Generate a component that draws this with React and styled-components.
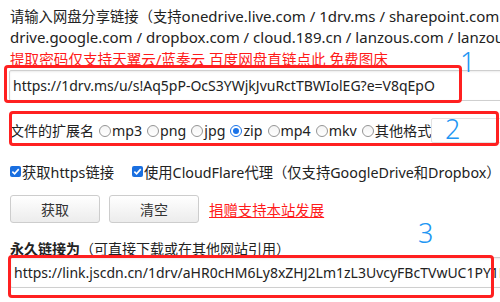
import React from "react";
import styled, { createGlobalStyle } from "styled-components";

const Global = createGlobalStyle`
  html, body { margin: 0; padding: 0; background: #fff; overflow: hidden; }
  body {
    font-family: "Noto Sans", "Noto Sans CJK SC", sans-serif;
    color: #222;
    width: 500px;
    height: 302px;
  }
`;

const Page = styled.div`
  position: relative;
  width: 500px;
  height: 302px;
  overflow: hidden;
`;

const Content = styled.div`
  width: 640px;
  padding: 6px 0 0 10px;
  display: flex;
  flex-direction: column;
`;

const Line = styled.div`
  font-size: 15px;
  line-height: 20px;
  white-space: nowrap;
`;

const Cjk = styled.span`
  font-size: 14.3px;
`;

const Notice = styled.div`
  margin-top: 2px;
  font-size: 14.6px;
  line-height: 19px;
  color: #ff1a1a;
  white-space: nowrap;
`;

const RedLink = styled.a`
  color: #ff1a1a;
  text-decoration: ${(p) => (p.$underline ? "underline" : "none")};
`;

const TextField = styled.input`
  box-sizing: border-box;
  width: ${(p) => p.$width}px;
  height: 31px;
  margin: ${(p) => p.$margin};
  padding: 0 3px;
  border: 1px solid #cfcfcf;
  border-radius: 2px;
  box-shadow: inset 0 1px 2px rgba(0, 0, 0, 0.08);
  font-family: "Noto Sans", "Noto Sans CJK SC", sans-serif;
  font-size: 14px;
  color: #222;
  background: #fff;
  outline: none;
`;

const RadioRow = styled.div`
  margin-top: 16px;
  display: flex;
  align-items: center;
  height: 26px;
  font-size: 14px;
  white-space: nowrap;
`;

const RadioLabel = styled.label`
  display: inline-flex;
  align-items: center;
  margin-left: 5px;
  font-size: 14.2px;
`;

const RadioDot = styled.span`
  box-sizing: border-box;
  width: 12px;
  height: 12px;
  border-radius: 50%;
  border: 1px solid ${(p) => (p.$checked ? "#1a73e8" : "#959595")};
  background: ${(p) => (p.$checked ? "#fff" : "linear-gradient(#f4f4f4, #ffffff)")};
  margin-right: 1px;
  margin-top: 1px;
  display: inline-flex;
  align-items: center;
  justify-content: center;
  &::after {
    content: "";
    width: 6px;
    height: 6px;
    border-radius: 50%;
    background: ${(p) => (p.$checked ? "#1a73e8" : "transparent")};
  }
`;

const OtherField = styled.input`
  box-sizing: border-box;
  width: 100px;
  height: 25px;
  margin-left: 0;
  border: 1px solid #e2e2e2;
  border-radius: 2px;
  background: #fff;
  outline: none;
`;

const CheckRow = styled.div`
  margin-top: 18px;
  display: flex;
  align-items: center;
  height: 20px;
  font-size: 14.3px;
  white-space: nowrap;
`;

const CheckLabel = styled.label`
  display: inline-flex;
  align-items: center;
  margin-right: ${(p) => p.$gap || 0}px;
`;

const CheckBox = styled.span`
  width: 11px;
  height: 11px;
  border-radius: 2px;
  background: #1a6fe0;
  display: inline-flex;
  align-items: center;
  justify-content: center;
  margin-right: 1px;
  margin-top: 1px;
`;

const ButtonRow = styled.div`
  margin-top: 14px;
  display: flex;
  align-items: center;
  gap: 9px;
`;

const Button = styled.button`
  box-sizing: border-box;
  width: 90px;
  height: 28px;
  border: 1px solid #cdcdcd;
  border-radius: 3px;
  background: linear-gradient(#ffffff, #ececec);
  font-family: "Noto Sans", "Noto Sans CJK SC", sans-serif;
  font-size: 14px;
  color: #333;
  padding: 0;
`;

const DonateLink = styled.a`
  margin-left: 1px;
  font-size: 14.4px;
  color: #ff1a1a;
  text-decoration: underline;
`;

const ResultLabel = styled.div`
  margin-top: 18px;
  font-size: 14px;
  line-height: 16px;
  white-space: nowrap;
  b { font-weight: 700; }
`;

const Annotation = styled.div`
  position: absolute;
  left: ${(p) => p.$x}px;
  top: ${(p) => p.$y}px;
  width: ${(p) => p.$w}px;
  height: ${(p) => p.$h}px;
  box-sizing: border-box;
  border: 3px solid #ff2020;
  border-radius: 4px;
  pointer-events: none;
`;

const Num = styled.div`
  position: absolute;
  left: ${(p) => p.$x}px;
  top: ${(p) => p.$y}px;
  font-family: "Noto Sans", sans-serif;
  font-size: 27px;
  line-height: 27px;
  font-weight: 300;
  color: #2196f3;
`;

const Check = () => (
  <svg width="9" height="9" viewBox="0 0 10 10">
    <path d="M1.5 5.2 L4 7.6 L8.6 2.4" fill="none" stroke="#fff" strokeWidth="1.8" />
  </svg>
);

const formats = ["mp3", "png", "jpg", "zip", "mp4", "mkv", "其他格式"];

export default function App() {
  return (
    <Page>
      <Global />
      <Content>
        <Line>
          <Cjk>请输入网盘分享链接（支持</Cjk>onedrive.live.com / 1drv.ms / sharepoint.com /
        </Line>
        <Line>drive.google.com / dropbox.com / cloud.189.cn / lanzous.com / lanzoux.com<Cjk>）</Cjk></Line>
        <Notice>
          提取密码仅支持天翼云/蓝奏云 <RedLink $underline>百度网盘直链点此</RedLink> <RedLink $underline>免费图床</RedLink>
        </Notice>
        <TextField
          $width={620}
          $margin="1px 0 0 -1px"
          readOnly
          value="https://1drv.ms/u/s!Aq5pP-OcS3YWjkJvuRctTBWIolEG?e=V8qEpO"
        />
        <RadioRow>
          文件的扩展名
          {formats.map((f) => (
            <RadioLabel key={f}>
              <RadioDot $checked={f === "zip"} />
              {f}
            </RadioLabel>
          ))}
          <OtherField readOnly />
        </RadioRow>
        <CheckRow>
          <CheckLabel $gap={18}>
            <CheckBox><Check /></CheckBox>获取https链接
          </CheckLabel>
          <CheckLabel>
            <CheckBox><Check /></CheckBox>使用CloudFlare代理（仅支持GoogleDrive和Dropbox）
          </CheckLabel>
        </CheckRow>
        <ButtonRow>
          <Button>获取</Button>
          <Button>清空</Button>
          <DonateLink>捐赠支持本站发展</DonateLink>
        </ButtonRow>
        <ResultLabel>
          <b>永久链接为</b>（可直接下载或在其他网站引用）
        </ResultLabel>
        <TextField
          $width={620}
          $margin="0 0 0 0"
          readOnly
          value="https://link.jscdn.cn/1drv/aHR0cHM6Ly8xZHJ2Lm1zL3UvcyFBcTVwUC1PY1MzWVdqa0p2dVJjdFRCV0lvbEVHP2U9VjhxRXBP"
        />
      </Content>
      <Annotation $x={4} $y={65} $w={458} $h={38} />
      <Annotation $x={9} $y={111} $w={490} $h={35} />
      <Annotation $x={8} $y={255} $w={486} $h={43} />
      <Num $x={460} $y={48}>1</Num>
      <Num $x={445} $y={115}>2</Num>
      <Num $x={418} $y={219}>3</Num>
    </Page>
  );
}
